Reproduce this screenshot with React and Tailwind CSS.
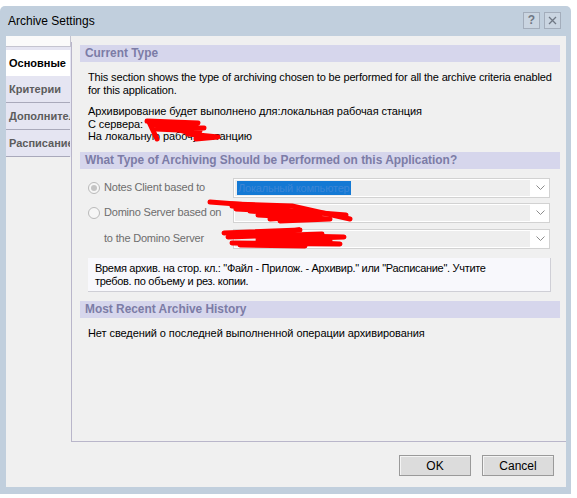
import React from "react";

const Chevron = () => (
  <svg width="9" height="5" viewBox="0 0 9 5" fill="none" stroke="#8c8c8c" strokeWidth="1">
    <path d="M0.5 0.5 L4.5 4.5 L8.5 0.5" />
  </svg>
);

const Header = ({ children }) => (
  <div className="ml-[8px] mr-[6px] h-[17px] bg-[#d6d6ec] pl-[5px] text-[11.9px] font-bold leading-[17px] text-[#7c7ca6] whitespace-nowrap">
    {children}
  </div>
);

const Select = ({ children }) => (
  <div className="flex h-[20px] w-[317px] border border-[#d2d2d2] bg-white">
    <div className="m-[1px] flex flex-1 items-center bg-[#eeeeee] pl-[2px]">{children}</div>
    <div className="flex w-[18px] items-center justify-center">
      <Chevron />
    </div>
  </div>
);

const Radio = ({ checked }) => (
  <div className="flex h-[12px] w-[12px] items-center justify-center rounded-full border border-[#b9b9b9] bg-[#f6f6f6]">
    {checked && <div className="h-[6px] w-[6px] rounded-full bg-[#c4c4c4]" />}
  </div>
);

const Tab = ({ children, active }) => (
  <div
    className={
      active
        ? "flex h-[26px] items-center overflow-hidden whitespace-nowrap bg-white pl-[3px] text-[11px] font-bold text-black"
        : "flex h-[27px] items-center overflow-hidden whitespace-nowrap border-b border-[#a9a9bb] pl-[3px] text-[11px] font-bold text-[#5c5c5c]"
    }
  >
    {children}
  </div>
);

// red marker strokes that hide names in the original screenshot
const Scribbles = () => (
  <svg className="pointer-events-none absolute left-0 top-0" width="577" height="498" viewBox="0 0 577 498" fill="none" stroke="#ff0000" strokeLinecap="round" strokeLinejoin="round">
    <g strokeWidth="5">
      <path d="M147 121 L198 123 L152 125 L204 128 L156 129 L200 131" />
      <path d="M149 122 L157 139" />
      <path d="M160 124 L190 133" />
      <path d="M188 134 L218 137 L196 139" />
      <path d="M210 202 L262 206 L236 209 L300 212 L258 215 L330 219 L280 221" />
      <path d="M232 206 L346 215" />
      <path d="M232 204 L292 206 L350 219" />
      <path d="M250 211 L320 216 L270 219" />
      <path d="M224 233 L300 230 L250 235 L344 237 L258 240 L340 244 L232 243" />
      <path d="M228 237 L322 234" />
      <path d="M240 245 L305 246" />
      <path d="M262 238 L330 241" />
    </g>
  </svg>
);

export default function App() {
  return (
    <div className="relative h-[498px] w-[577px] overflow-hidden bg-white font-['Liberation_Sans',Arial,sans-serif]">
      <div className="mt-[6px] flex h-[488px] w-[571px] flex-col rounded-t-[5px] bg-[#c1cfdd] px-[5px] pb-[7px] pl-[6px]">
        {/* title bar */}
        <div className="flex h-[30px] items-center justify-between">
          <div className="pl-[2px] text-[12px] text-black">Archive Settings</div>
          <div className="flex gap-[4px] pr-[5px] pb-[2px]">
            <div className="flex h-[17px] w-[17px] items-center justify-center border border-[#a3adbb] bg-[#cad5e1] text-[12px] font-bold leading-none text-[#707884]">
              ?
            </div>
            <div className="flex h-[17px] w-[17px] items-center justify-center border border-[#a3adbb] bg-[#cad5e1]">
              <svg width="9" height="9" viewBox="0 0 9 9" stroke="#707884" strokeWidth="1.3">
                <path d="M1 1 L8 8 M8 1 L1 8" />
              </svg>
            </div>
          </div>
        </div>

        {/* client area */}
        <div className="flex flex-1 bg-[#f0f0f0]">
          {/* tabs */}
          <div className="flex w-[65px] flex-col">
            <div className="h-[11px] border-b border-r border-[#c4c4d0] bg-[#fafafa]" />
            <div className="flex flex-col bg-[#e5e5f2] pt-[3px] pr-[1px]">
              <Tab active>Основные</Tab>
              <Tab>Критерии</Tab>
              <Tab>Дополнительно</Tab>
              <Tab>Расписание</Tab>
            </div>
          </div>

          <div className="flex flex-1 flex-col">
            {/* panel */}
            <div className="mt-[6px] h-[400px] border-b border-l border-[#b9b6ca] pt-[3px] text-[11px] text-black">
              <Header>Current Type</Header>
              <div className="ml-[16px] mt-[9px] leading-[13px] tracking-[-0.15px]">
                This section shows the type of archiving chosen to be performed for all the archive criteria enabled
                <br />
                for this application.
              </div>
              <div className="ml-[16px] mt-[8px] leading-[12.5px] tracking-[-0.08px]">
                <div>Архивирование будет выполнено для:локальная рабочая станция</div>
                <div>С сервера:</div>
                <div>На локальную рабочую станцию</div>
              </div>

              <div className="mt-[9px]">
                <Header>What Type of Archiving Should be Performed on this Application?</Header>
              </div>

              <div className="ml-[16px] mt-[9px] flex flex-col gap-[5px] text-[#6d6d6d] tracking-[-0.2px]">
                <div className="flex items-center">
                  <div className="flex w-[145px] items-center gap-[4px]">
                    <Radio checked />
                    <span>Notes Client based to</span>
                  </div>
                  <Select>
                    <span className="bg-[#1479d4] px-[1px] leading-[14px] text-[#3c86d6]">Локальный компьютер</span>
                  </Select>
                </div>
                <div className="flex items-center">
                  <div className="flex w-[145px] items-center gap-[4px]">
                    <Radio />
                    <span>Domino Server based on</span>
                  </div>
                  <Select />
                </div>
                <div className="mt-[1px] flex items-center">
                  <div className="w-[145px] pl-[16px]">to the Domino Server</div>
                  <Select />
                </div>
              </div>

              <div className="ml-[16px] mr-[15px] mt-[9px] h-[34px] border-b border-r border-[#cfcfd6] bg-[#f8f8fc] pl-[7px] pt-[4px] leading-[13px] tracking-[-0.3px]">
                Время архив. на стор. кл.: "Файл - Прилож. - Архивир." или "Расписание". Учтите
                <br />
                требов. по объему и рез. копии.
              </div>

              <div className="mt-[9px]">
                <Header>Most Recent Archive History</Header>
              </div>
              <div className="ml-[16px] mt-[9px] leading-[13px] tracking-[-0.08px]">
                Нет сведений о последней выполненной операции архивирования
              </div>
            </div>

            {/* buttons */}
            <div className="flex justify-end gap-[11px] pr-[12px] pt-[13px]">
              <button className="h-[21px] w-[72px] border border-[#9a9a9a] bg-[#dcdcdc] text-[12px] text-black shadow-[inset_1px_1px_0_#f4f4f4]">
                OK
              </button>
              <button className="h-[21px] w-[72px] border border-[#9a9a9a] bg-[#dcdcdc] text-[12px] text-black shadow-[inset_1px_1px_0_#f4f4f4]">
                Cancel
              </button>
            </div>
          </div>
        </div>
      </div>
      <Scribbles />
    </div>
  );
}
